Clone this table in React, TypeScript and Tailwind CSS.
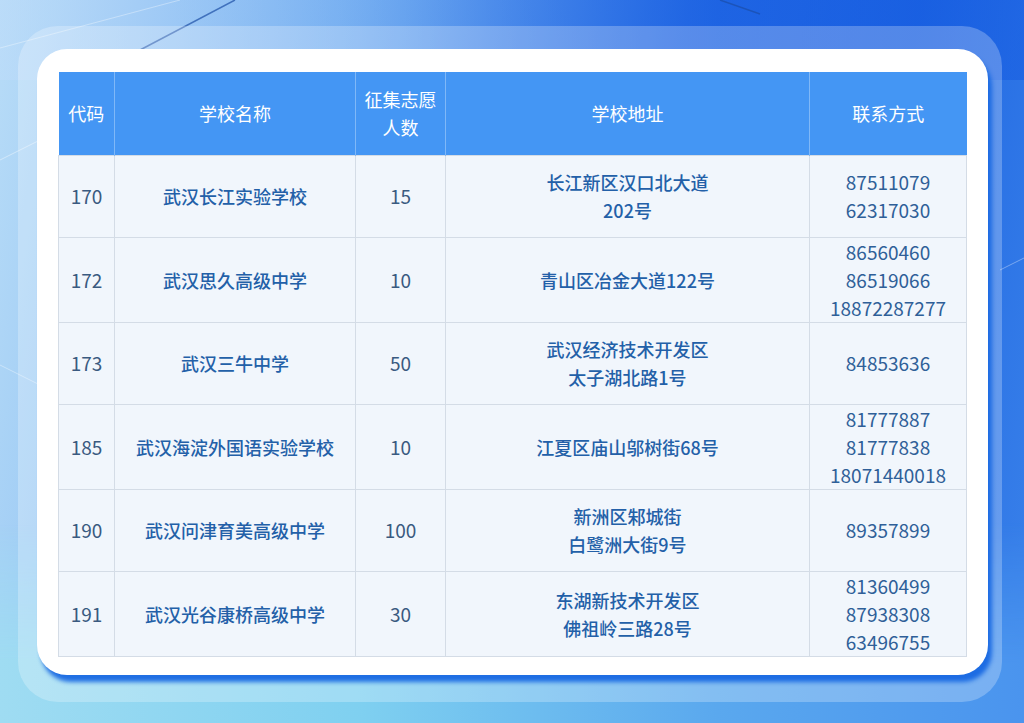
import React from 'react';

// 数据
interface SchoolRow {
  code: string;
  name: string;
  quota: string;
  address: string[];
  phones: string[];
}

const rows: SchoolRow[] = [
  { code: '170', name: '武汉长江实验学校', quota: '15', address: ['长江新区汉口北大道', '202号'], phones: ['87511079', '62317030'] },
  { code: '172', name: '武汉思久高级中学', quota: '10', address: ['青山区冶金大道122号'], phones: ['86560460', '86519066', '18872287277'] },
  { code: '173', name: '武汉三牛中学', quota: '50', address: ['武汉经济技术开发区', '太子湖北路1号'], phones: ['84853636'] },
  { code: '185', name: '武汉海淀外国语实验学校', quota: '10', address: ['江夏区庙山邬树街68号'], phones: ['81777887', '81777838', '18071440018'] },
  { code: '190', name: '武汉问津育美高级中学', quota: '100', address: ['新洲区邾城街', '白鹭洲大街9号'], phones: ['89357899'] },
  { code: '191', name: '武汉光谷康桥高级中学', quota: '30', address: ['东湖新技术开发区', '佛祖岭三路28号'], phones: ['81360499', '87938308', '63496755'] },
];

const FONT = { fontFamily: '"Noto Sans CJK SC", "Noto Sans", sans-serif' };

function Lines({ items }: { items: string[] }) {
  return (
    <>
      {items.map((t) => (
        <div key={t}>{t}</div>
      ))}
    </>
  );
}

export default function App() {
  return (
    <div
      className="relative w-[1024px] h-[723px] overflow-hidden bg-[linear-gradient(100deg,#b8dcf7_0%,#7ab4f2_30%,#2f74e6_60%,#1f66e2_80%,#3a82ea_100%)]"
      style={FONT}
    >
      {/* 背景の装飾 */}
      <div className="absolute inset-x-0 bottom-0 h-[200px] bg-[linear-gradient(90deg,#9fdcf2_0%,#7fd0f0_35%,#5aa8ee_70%,#4a94ee_100%)] [mask-image:linear-gradient(to_bottom,transparent,black_70%)]" />
      <div className="absolute inset-x-0 top-0 h-[80px] bg-[linear-gradient(90deg,rgba(190,220,250,0.5)_0%,rgba(80,140,235,0.2)_40%,rgba(20,90,225,0.6)_70%,rgba(20,90,225,0.5)_100%)]" />
      <svg className="absolute inset-0" width="1024" height="723">
        <line x1="140" y1="50" x2="235" y2="0" stroke="#1d4fa6" strokeWidth="1.5" opacity="0.7" />
        <line x1="0" y1="48" x2="180" y2="0" stroke="#ffffff" strokeWidth="1" opacity="0.35" />
        <line x1="0" y1="160" x2="40" y2="140" stroke="#ffffff" strokeWidth="1" opacity="0.4" />
        <line x1="0" y1="365" x2="40" y2="385" stroke="#ffffff" strokeWidth="1" opacity="0.35" />
        <line x1="720" y1="0" x2="760" y2="14" stroke="#1a4aa0" strokeWidth="1.5" opacity="0.6" />
        <line x1="1000" y1="270" x2="1024" y2="258" stroke="#ffffff" strokeWidth="1" opacity="0.35" />
      </svg>

      <div className="relative pt-[26px] pl-[18px] pr-[22px]">
        {/* 外枠 */}
        <div className="rounded-[40px] bg-white/25 pt-[23px] pl-[19px] pr-[14px] pb-[27px]">
          {/* カード */}
          <div className="rounded-[30px] bg-white pt-[23px] pb-[18px] pl-[21px] pr-[22px] shadow-[4px_7px_4px_rgba(24,104,226,0.95)]">
            <table className="w-full border-collapse table-fixed text-center">
              <colgroup>
                <col className="w-[56px]" />
                <col className="w-[241px]" />
                <col className="w-[90px]" />
                <col className="w-[364px]" />
                <col className="w-[157px]" />
              </colgroup>
              <thead>
                <tr className="h-[83px] bg-[#4496f4] text-white text-[18px] leading-[28px]">
                  <th className="font-normal border-r border-[#7fb8f8]">代码</th>
                  <th className="font-normal border-r border-[#7fb8f8]">学校名称</th>
                  <th className="font-normal border-r border-[#7fb8f8]">
                    <div>征集志愿</div>
                    <div>人数</div>
                  </th>
                  <th className="font-normal border-r border-[#7fb8f8]">学校地址</th>
                  <th className="font-normal">联系方式</th>
                </tr>
              </thead>
              <tbody className="bg-[#f1f6fc] text-[18px] leading-[28px]">
                {rows.map((r) => (
                  <tr key={r.code} className="h-[82.2px]">
                    <td className="border border-[#d4dce6] text-[#3a5a80] text-[19px]">{r.code}</td>
                    <td className="border border-[#d4dce6] text-[#2360a8] font-medium">{r.name}</td>
                    <td className="border border-[#d4dce6] text-[#3a5a80] text-[19px]">{r.quota}</td>
                    <td className="border border-[#d4dce6] text-[#2360a8] font-medium">
                      <Lines items={r.address} />
                    </td>
                    <td className="border border-[#d4dce6] text-[#2f5f98] text-[19px]">
                      <Lines items={r.phones} />
                    </td>
                  </tr>
                ))}
              </tbody>
            </table>
          </div>
        </div>
      </div>
    </div>
  );
}
